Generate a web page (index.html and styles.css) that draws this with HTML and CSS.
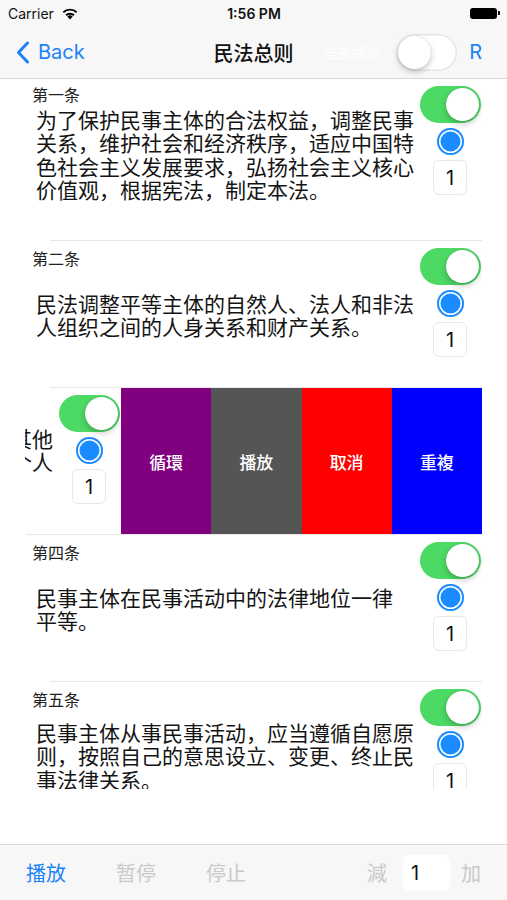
FILE: index.html
```html
<!DOCTYPE html>
<html lang="zh-CN">
<head>
    <meta charset="UTF-8">
    <meta name="viewport" content="width=device-width, initial-scale=1.0">
    <title>民法总则</title>
    <link rel="stylesheet" href="styles.css">
</head>
<body>
    <div class="topbar">
        <div class="status">
            <div class="status-left">
                <span>Carrier</span>
                <svg class="wifi" width="18" height="13" viewBox="0 0 18 13">
                    <path d="M9 12.5 L6.3 9.6 A3.9 3.9 0 0 1 11.7 9.6 Z" fill="#000"/>
                    <path d="M4.4 7.6 A6.6 6.6 0 0 1 13.6 7.6 L12.3 9 A4.7 4.7 0 0 0 5.7 9 Z" fill="#000"/>
                    <path d="M1.6 4.7 A10.5 10.5 0 0 1 16.4 4.7 L15 6.1 A8.5 8.5 0 0 0 3 6.1 Z" fill="#000"/>
                </svg>
            </div>
            <div class="status-time">1:56 PM</div>
            <div class="status-right"><span class="battery"></span><span class="battery-nub"></span></div>
        </div>
        <div class="nav">
            <a class="back" href="#">
                <svg width="14" height="23" viewBox="0 0 14 23">
                    <path d="M11.5 2 L2.5 11.5 L11.5 21" fill="none" stroke="#1b82f7" stroke-width="3" stroke-linecap="round" stroke-linejoin="round"/>
                </svg>
                <span>Back</span>
            </a>
            <div class="title">民法总则</div>
            <div class="nav-right">
                <span class="ghost">全部播放</span>
                <span class="switch off"><span class="thumb"></span></span>
                <span class="nav-r">R</span>
            </div>
        </div>
    </div>

    <div class="list">
        <div class="row row-first">
            <div class="cell-main">
                <div class="label">第一条</div>
                <div class="body"><p>为了保护民事主体的合法权益，调整民事<br>关系，维护社会和经济秩序，适应中国特<br>色社会主义发展要求，弘扬社会主义核心<br>价值观，根据宪法，制定本法。</p></div>
            </div>
            <div class="controls">
                <span class="switch on"><span class="thumb"></span></span>
                <span class="radio"></span>
                <span class="count">1</span>
            </div>
        </div>
        <div class="sep"></div>

        <div class="row">
            <div class="cell-main">
                <div class="label">第二条</div>
                <div class="body"><p>民法调整平等主体的自然人、法人和非法<br>人组织之间的人身关系和财产关系。</p></div>
            </div>
            <div class="controls">
                <span class="switch on"><span class="thumb"></span></span>
                <span class="radio"></span>
                <span class="count">1</span>
            </div>
        </div>
        <div class="sep"></div>

        <div class="row swiped">
            <div class="swipe-clip">
                <div class="row-content">
                    <div class="cell-main">
                        <div class="label">第三条</div>
                        <div class="body"><p>民事主体的人身权利、财产权利以及其他<br>合法权益受法律保护，任何组织或者个人<br>不得侵犯。</p></div>
                    </div>
                    <div class="controls">
                        <span class="switch on"><span class="thumb"></span></span>
                        <span class="radio"></span>
                        <span class="count">1</span>
                    </div>
                </div>
            </div>
            <div class="action loop">循環</div>
            <div class="action play">播放</div>
            <div class="action cancel">取消</div>
            <div class="action repeat">重複</div>
        </div>
        <div class="sep sep-wide"></div>

        <div class="row">
            <div class="cell-main">
                <div class="label">第四条</div>
                <div class="body"><p>民事主体在民事活动中的法律地位一律<br>平等。</p></div>
            </div>
            <div class="controls">
                <span class="switch on"><span class="thumb"></span></span>
                <span class="radio"></span>
                <span class="count">1</span>
            </div>
        </div>
        <div class="sep"></div>

        <div class="row">
            <div class="cell-main">
                <div class="label">第五条</div>
                <div class="body"><p>民事主体从事民事活动，应当遵循自愿原<br>则，按照自己的意思设立、变更、终止民<br>事法律关系。</p></div>
            </div>
            <div class="controls">
                <span class="switch on"><span class="thumb"></span></span>
                <span class="radio"></span>
                <span class="count">1</span>
            </div>
        </div>
    </div>

    <div class="spacer"></div>

    <div class="toolbar">
        <div class="tool-left">
            <span class="tool active">播放</span>
            <span class="tool">暂停</span>
            <span class="tool">停止</span>
        </div>
        <div class="tool-right">
            <span class="tool">減</span>
            <span class="step">1</span>
            <span class="tool">加</span>
        </div>
    </div>
</body>
</html>
```

FILE: styles.css
```css
body {
    font-family: 'Inter', 'Noto Sans CJK SC', sans-serif;
    background-color: #fff;
    color: #111;
    margin: 0;
    padding: 0;
    width: 507px;
    height: 900px;
    display: flex;
    flex-direction: column;
    overflow: hidden;
}
.topbar {
    background-color: #f7f7f7;
    border-bottom: 1px solid #d6d6d6;
}
.status {
    height: 26px;
    padding: 0 7px 0 8px;
    display: grid;
    grid-template-columns: 1fr auto 1fr;
    align-items: center;
    font-size: 14px;
}
.status-left {
    display: flex;
    align-items: center;
    gap: 7px;
}
.status-time {
    font-weight: 600;
}
.status-right {
    display: flex;
    justify-content: flex-end;
    align-items: center;
}
.battery {
    width: 27px;
    height: 11px;
    background-color: #000;
    border-radius: 3px;
}
.battery-nub {
    width: 2px;
    height: 4px;
    margin-left: 1px;
    background-color: #000;
    border-radius: 0 1px 1px 0;
}
.nav {
    height: 52px;
    display: grid;
    grid-template-columns: 1fr auto 1fr;
    align-items: center;
}
.back {
    display: flex;
    align-items: center;
    gap: 8px;
    padding-left: 16px;
    color: #1b82f7;
    text-decoration: none;
    font-size: 20px;
}
.title {
    font-family: 'Noto Sans CJK SC', sans-serif;
    font-size: 20px;
    font-weight: 500;
    color: #111;
}
.nav-right {
    display: flex;
    justify-content: flex-end;
    align-items: center;
    padding-right: 25px;
}
.ghost {
    font-family: 'Noto Sans CJK SC', sans-serif;
    font-size: 14px;
    color: #fff;
    margin-right: 16px;
}
.nav-r {
    color: #1b82f7;
    font-size: 20px;
    margin-left: 12px;
}

/* switches */
.switch {
    width: 61px;
    height: 37px;
    box-sizing: border-box;
    border-radius: 19px;
    padding: 2px;
    display: flex;
    flex-shrink: 0;
}
.switch .thumb {
    width: 33px;
    height: 33px;
    border-radius: 50%;
    background-color: #fff;
    box-shadow: 0 3px 6px rgba(0, 0, 0, 0.22), 0 0 1px rgba(0, 0, 0, 0.2);
}
.switch.on {
    background-color: #4cd964;
    justify-content: flex-end;
}
.switch.off {
    background-color: #fff;
    box-shadow: inset 0 0 0 1.5px #e5e5e5;
    justify-content: flex-start;
}

/* list */
.list {
    width: 482px;
    height: 710px;
    flex: none;
    overflow: hidden;
}
.row {
    height: 146px;
    display: flex;
}
.row-first {
    height: 161px;
}
.cell-main {
    flex: 0 0 418px;
    display: flex;
    flex-direction: column;
}
.label {
    font-family: 'Noto Sans CJK SC', sans-serif;
    font-size: 16px;
    line-height: 20px;
    padding: 7px 0 0 32px;
    color: #222;
}
.body {
    flex: 1;
    display: flex;
    align-items: center;
    padding: 0 0 25px 36px;
}
.row-first .label {
    padding-top: 5px;
}
.row-first .body {
    padding-bottom: 35px;
}
.body p {
    margin: 0;
    font-family: 'Noto Sans CJK SC', sans-serif;
    font-size: 21px;
    line-height: 23.5px;
    white-space: nowrap;
    color: #141414;
}
.controls {
    flex: 0 0 64px;
    display: flex;
    flex-direction: column;
    align-items: center;
    padding-top: 7px;
}
.radio {
    width: 27px;
    height: 27px;
    margin-top: 5px;
    border-radius: 50%;
    background-color: #1a8cff;
    box-shadow: inset 0 0 0 2px #1a8cff, inset 0 0 0 3.5px #fff;
}
.count {
    width: 34px;
    height: 35px;
    margin-top: 5px;
    box-sizing: border-box;
    border: 1px solid #e8e8e8;
    border-radius: 6px;
    display: flex;
    align-items: center;
    justify-content: center;
    font-size: 20px;
    color: #111;
}
.sep {
    height: 1px;
    margin-left: 50px;
    background-color: #e8e8e8;
}
.sep-wide {
    margin-left: 26px;
}

/* swiped row */
.swiped {
    padding-left: 25px;
}
.swipe-clip {
    flex: 0 0 96px;
    overflow: hidden;
    display: flex;
    justify-content: flex-end;
}
.row-content {
    flex: 0 0 482px;
    display: flex;
}
.action {
    flex: 1;
    display: flex;
    align-items: center;
    justify-content: center;
    color: #fff;
    font-family: 'Noto Sans CJK TC', sans-serif;
    font-size: 17px;
    font-weight: 500;
}
.loop {
    background-color: #800080;
}
.play {
    background-color: #555;
}
.cancel {
    background-color: #ff0000;
}
.repeat {
    background-color: #0000ff;
}

/* toolbar */
.spacer {
    flex: 1;
}
.toolbar {
    height: 55px;
    background-color: #f7f7f7;
    border-top: 1px solid #dcdcdc;
    display: flex;
    justify-content: space-between;
    align-items: center;
    padding: 0 26px;
}
.tool-left {
    display: flex;
    gap: 50px;
}
.tool-right {
    display: flex;
    align-items: center;
}
.tool {
    font-family: 'Noto Sans CJK SC', sans-serif;
    font-size: 20px;
    color: #c9c9c9;
}
.tool.active {
    color: #1b82f7;
}
.step {
    width: 47px;
    height: 36px;
    margin: 0 11px 0 16px;
    box-sizing: border-box;
    padding-left: 8px;
    background-color: #fff;
    border-radius: 6px;
    display: flex;
    align-items: center;
    font-size: 20px;
    color: #111;
}
```
